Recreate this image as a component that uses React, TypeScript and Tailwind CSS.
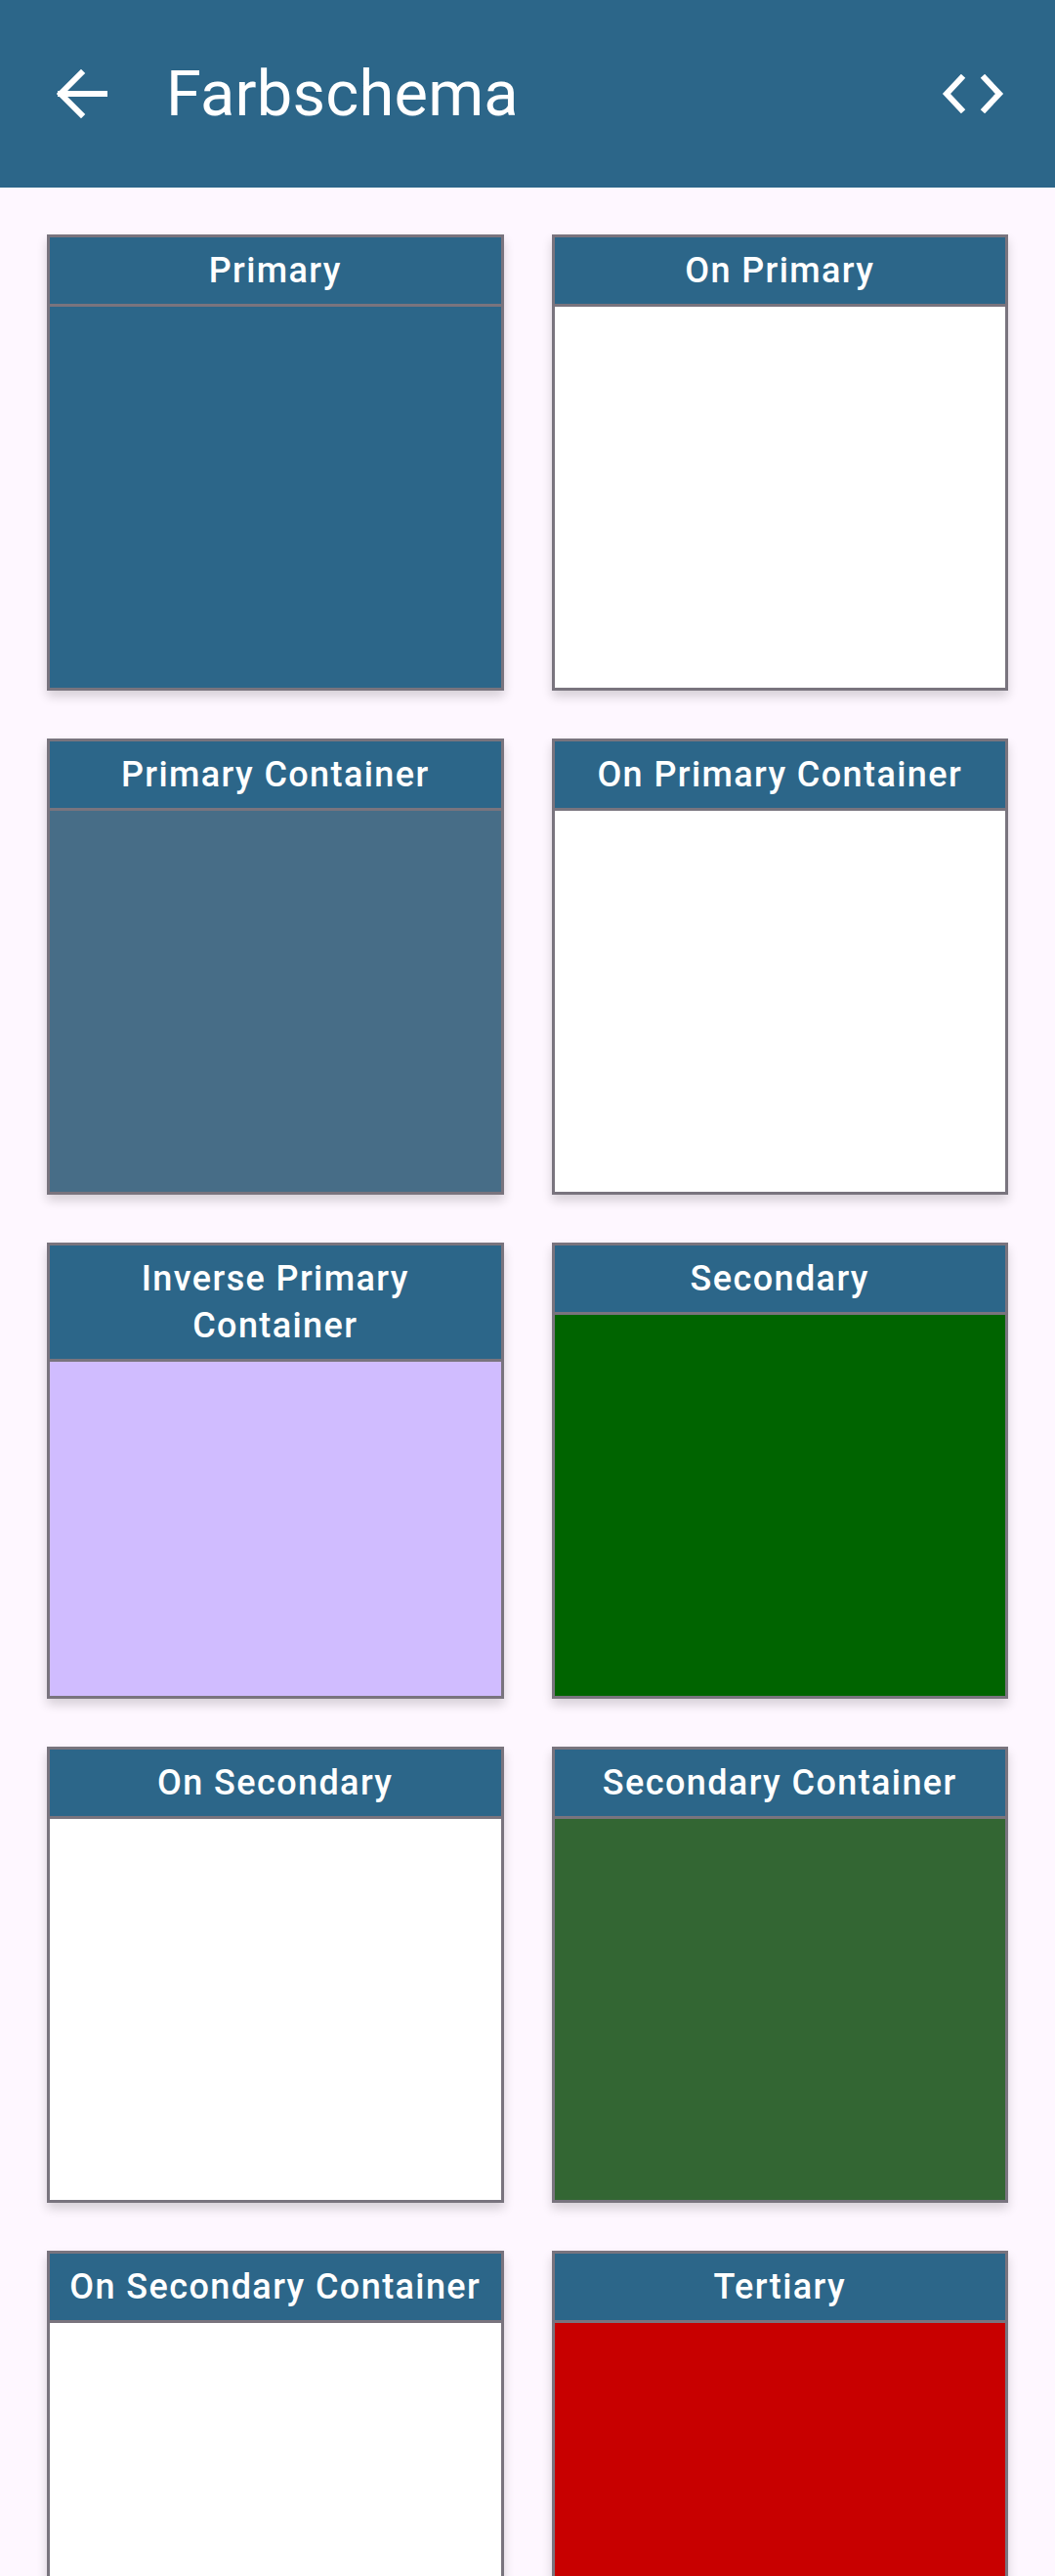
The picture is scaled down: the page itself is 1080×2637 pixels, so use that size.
const swatches = [
  { name: "Primary", color: "bg-[#2c6689]" },
  { name: "On Primary", color: "bg-white" },
  { name: "Primary Container", color: "bg-[#476d87]" },
  { name: "On Primary Container", color: "bg-white" },
  { name: "Inverse Primary Container", color: "bg-[#d0bcff]" },
  { name: "Secondary", color: "bg-[#006400]" },
  { name: "On Secondary", color: "bg-white" },
  { name: "Secondary Container", color: "bg-[#336633]" },
  { name: "On Secondary Container", color: "bg-white" },
  { name: "Tertiary", color: "bg-[#c80000]" },
];

const App = () => {
  return (
    <div className="h-[2637px] overflow-hidden bg-[#fef7ff] font-['Roboto',sans-serif]">
      <div className="h-[192px] bg-[#2c6689] flex items-center text-white">
        <button className="w-[120px] h-full flex items-center pl-[58px]">
          <svg width="52" height="52" viewBox="0 0 52 52" fill="none" stroke="white" strokeWidth="6" strokeLinecap="square">
            <path d="M4 26 H49" />
            <path d="M25 5 L4 26 L25 47" />
          </svg>
        </button>
        <h1 className="ml-[50px] text-[65px] leading-none font-normal tracking-[0.2px]">Farbschema</h1>
        <div className="ml-auto mr-[52px] flex items-center">
          <svg width="64" height="40" viewBox="0 0 64 40" fill="none" stroke="white" strokeWidth="6" strokeLinecap="square" strokeLinejoin="miter">
            <path d="M20 4 L5 20 L20 36" />
            <path d="M44 4 L59 20 L44 36" />
          </svg>
        </div>
      </div>

      <div className="grid grid-cols-2 gap-x-[49px] gap-y-[49px] px-[48px] pt-[48px]">
        {swatches.map((s) => (
          <div key={s.name} className="h-[467px] flex flex-col border-[3px] border-[#79747e] shadow-[0_6px_10px_rgba(0,0,0,0.16)]">
            <div className="bg-[#2c6689] text-white text-center text-[36px] leading-[48px] font-medium tracking-[1.4px] py-[10px] px-2 border-b-[3px] border-[#79747e]">
              {s.name}
            </div>
            <div className={`flex-1 ${s.color}`} />
          </div>
        ))}
      </div>
    </div>
  );
};

export default App;
